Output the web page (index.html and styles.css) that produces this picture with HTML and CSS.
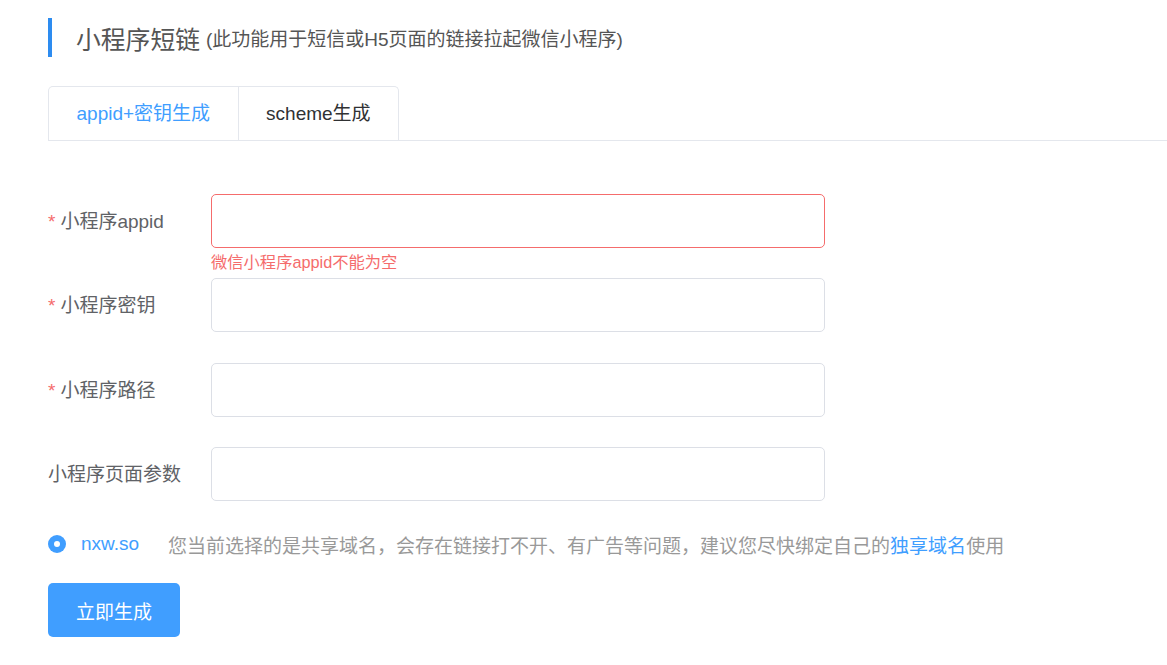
FILE: index.html
```html
<!DOCTYPE html>
<html lang="zh-CN">
<head>
<meta charset="utf-8">
<title>小程序短链</title>
<link rel="stylesheet" href="styles.css">
</head>
<body>
<div class="page">
  <div class="title">
    <span class="title-main">小程序短链</span>
    <span class="title-sub">(此功能用于短信或H5页面的链接拉起微信小程序)</span>
  </div>

  <div class="tabs">
    <div class="tabs-nav">
      <div class="tab active">appid+密钥生成</div>
      <div class="tab">scheme生成</div>
    </div>
  </div>

  <form class="form">
    <div class="form-item">
      <label class="label required">小程序appid</label>
      <div class="control">
        <input class="input is-error" type="text">
        <div class="error">微信小程序appid不能为空</div>
      </div>
    </div>
    <div class="form-item">
      <label class="label required">小程序密钥</label>
      <div class="control"><input class="input" type="text"></div>
    </div>
    <div class="form-item">
      <label class="label required">小程序路径</label>
      <div class="control"><input class="input" type="text"></div>
    </div>
    <div class="form-item">
      <label class="label">小程序页面参数</label>
      <div class="control"><input class="input" type="text"></div>
    </div>

    <div class="domain-row">
      <span class="radio"><span class="radio-dot"></span></span>
      <span class="radio-label">nxw.so</span>
      <span class="hint">您当前选择的是共享域名，会存在链接打不开、有广告等问题，建议您尽快绑定自己的<a class="link" href="#">独享域名</a>使用</span>
    </div>

    <button class="btn" type="button">立即生成</button>
  </form>
</div>
</body>
</html>
```

FILE: styles.css
```css
* { box-sizing: border-box; }

html, body {
  margin: 0;
  padding: 0;
  background: #fff;
}

body {
  font-family: "Liberation Sans", "Noto Sans CJK SC", sans-serif;
  font-size: 19px;
  color: #606266;
}

.page {
  padding: 18px 0 0 48px;
}

.title {
  display: flex;
  align-items: center;
  height: 39px;
  border-left: 4px solid #2d8cf0;
  padding-left: 24px;
  white-space: nowrap;
}

.title-main {
  font-size: 24.8px;
  color: #555;
  margin-right: 6px;
}

.title-sub {
  font-size: 19px;
  color: #555;
}

.tabs {
  margin-top: 29px;
  border-bottom: 1px solid #e4e7ed;
}

.tabs-nav {
  display: inline-flex;
  border: 1px solid #e4e7ed;
  border-bottom: none;
  border-radius: 5px 5px 0 0;
  vertical-align: bottom;
}

.tab {
  height: 53px;
  line-height: 53px;
  padding: 0 27.5px;
  color: #303133;
  font-size: 19px;
  white-space: nowrap;
}

.tab + .tab {
  border-left: 1px solid #e4e7ed;
}

.tab.active {
  color: #409eff;
}

.form {
  margin-top: 53px;
}

.form-item {
  display: flex;
  margin-bottom: 30.3px;
}

.label {
  width: 163px;
  flex: none;
  height: 54px;
  line-height: 55px;
  color: #606266;
  white-space: nowrap;
}

.label.required::before {
  content: "*";
  color: #f56c6c;
  margin-right: 5px;
}

.control {
  position: relative;
}

.input {
  display: block;
  width: 614px;
  height: 54px;
  border: 1px solid #dcdfe6;
  border-radius: 5px;
  outline: none;
  padding: 0 20px;
  font: inherit;
  color: #606266;
  background: #fff;
}

.input.is-error {
  border-color: #f56c6c;
}

.error {
  position: absolute;
  left: 0;
  top: 100%;
  padding-top: 6px;
  font-size: 16.3px;
  line-height: 1;
  color: #f56c6c;
  white-space: nowrap;
}

.domain-row {
  display: flex;
  align-items: center;
  height: 26px;
  white-space: nowrap;
}

.radio {
  width: 18px;
  height: 18px;
  border-radius: 50%;
  background: #409eff;
  display: flex;
  align-items: center;
  justify-content: center;
  flex: none;
}

.radio-dot {
  width: 6px;
  height: 6px;
  border-radius: 50%;
  background: #fff;
}

.radio-label {
  margin-left: 15px;
  color: #409eff;
}

.hint {
  margin-left: 29px;
  color: #999;
}

.link {
  color: #409eff;
  text-decoration: none;
}

.btn {
  display: block;
  margin-top: 26px;
  height: 54px;
  padding: 0 28px;
  border: none;
  border-radius: 5px;
  background: #409eff;
  color: #fff;
  font: inherit;
  font-size: 19px;
  cursor: pointer;
}
```
